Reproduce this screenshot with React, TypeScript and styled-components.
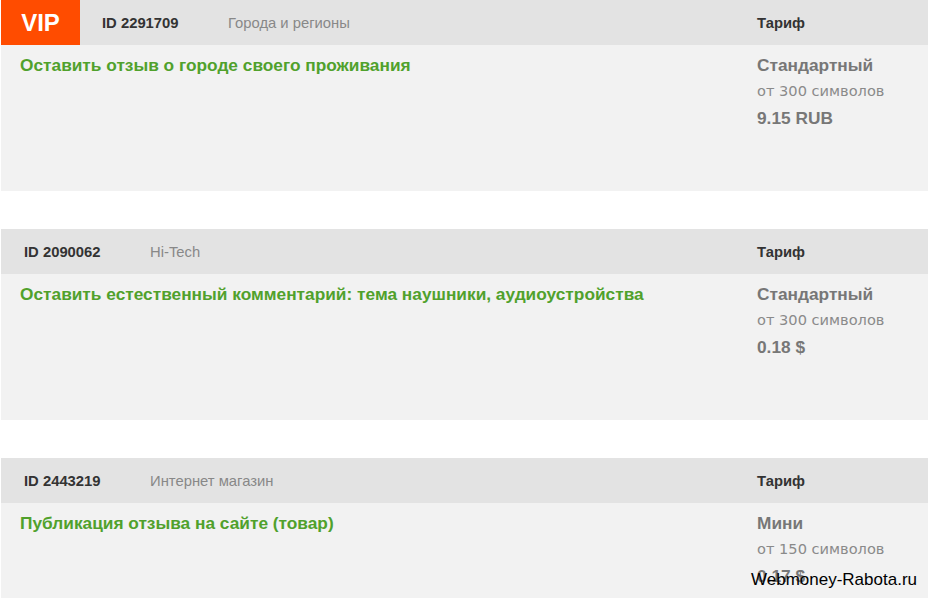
import styled, { createGlobalStyle } from "styled-components";

const GlobalStyle = createGlobalStyle`
    html, body {
        margin: 0;
        padding: 0;
        background: #ffffff;
        overflow: hidden;
    }
    body {
        font-family: "Liberation Sans", Arial, sans-serif;
    }
`;

type Task = {
    id: string;
    category: string;
    title: string;
    tariff: string;
    symbols: string;
    price: string;
    vip?: boolean;
};

const tasks: Task[] = [
    {
        id: "2291709",
        category: "Города и регионы",
        title: "Оставить отзыв о городе своего проживания",
        tariff: "Стандартный",
        symbols: "от 300 символов",
        price: "9.15 RUB",
        vip: true,
    },
    {
        id: "2090062",
        category: "Hi-Tech",
        title: "Оставить естественный комментарий: тема наушники, аудиоустройства",
        tariff: "Стандартный",
        symbols: "от 300 символов",
        price: "0.18 $",
    },
    {
        id: "2443219",
        category: "Интернет магазин",
        title: "Публикация отзыва на сайте (товар)",
        tariff: "Мини",
        symbols: "от 150 символов",
        price: "0.17 $",
    },
];

const Page = styled.div`
    position: relative;
    height: 598px;
    padding-left: 1px;
    display: flex;
    flex-direction: column;
    gap: 38px;
`;

const Card = styled.div`
    display: flex;
    flex-direction: column;
    flex-shrink: 0;
`;

const Header = styled.div`
    height: 45px;
    background: #e3e3e3;
    display: grid;
    grid-template-columns: 1fr 171px;
    align-items: center;
`;

const HeaderLeft = styled.div<{ vip: boolean }>`
    display: flex;
    align-items: center;
    height: 100%;
    padding-left: ${({ vip }) => (vip ? "0" : "23px")};
`;

const VipBadge = styled.div`
    width: 79px;
    height: 100%;
    background: #ff4c00;
    color: #ffffff;
    font-weight: bold;
    font-size: 24px;
    display: flex;
    align-items: center;
    justify-content: center;
    margin-right: 22px;
`;

const IdCell = styled.div`
    width: 126px;
    font-size: 14.8px;
    font-weight: bold;
    color: #333333;
`;

const Category = styled.div`
    font-size: 14.8px;
    color: #888888;
`;

const HeaderTariff = styled.div`
    font-size: 14.8px;
    font-weight: bold;
    color: #333333;
`;

const Body = styled.div`
    height: 146px;
    background: #f2f2f2;
    display: grid;
    grid-template-columns: 1fr 171px;
    box-sizing: border-box;
    padding-top: 11px;
`;

const Title = styled.div`
    padding-left: 19px;
    font-size: 17.3px;
    line-height: 18px;
    font-weight: bold;
    color: #50a12c;
`;

const TariffCol = styled.div`
    display: flex;
    flex-direction: column;
`;

const TariffName = styled.div`
    font-size: 17.3px;
    line-height: 18px;
    font-weight: bold;
    color: #777777;
`;

const Symbols = styled.div`
    margin-top: 8px;
    font-family: "DejaVu Sans", Verdana, sans-serif;
    font-size: 14.6px;
    line-height: 18px;
    color: #8a8a8a;
`;

const Price = styled.div`
    margin-top: 9px;
    font-size: 17.3px;
    line-height: 18px;
    font-weight: bold;
    color: #777777;
`;

const Watermark = styled.div`
    position: absolute;
    left: 751px;
    top: 570px;
    font-size: 17px;
    line-height: 20px;
    color: #000000;
`;

const TaskCard = ({ task }: { task: Task }) => (
    <Card>
        <Header>
            <HeaderLeft vip={!!task.vip}>
                {task.vip && <VipBadge>VIP</VipBadge>}
                <IdCell>ID {task.id}</IdCell>
                <Category>{task.category}</Category>
            </HeaderLeft>
            <HeaderTariff>Тариф</HeaderTariff>
        </Header>
        <Body>
            <Title>{task.title}</Title>
            <TariffCol>
                <TariffName>{task.tariff}</TariffName>
                <Symbols>{task.symbols}</Symbols>
                <Price>{task.price}</Price>
            </TariffCol>
        </Body>
    </Card>
);

export default function App() {
    return (
        <>
            <GlobalStyle />
            <Page>
                {tasks.map((t) => (
                    <TaskCard key={t.id} task={t} />
                ))}
                <Watermark>Webmoney-Rabota.ru</Watermark>
            </Page>
        </>
    );
}
